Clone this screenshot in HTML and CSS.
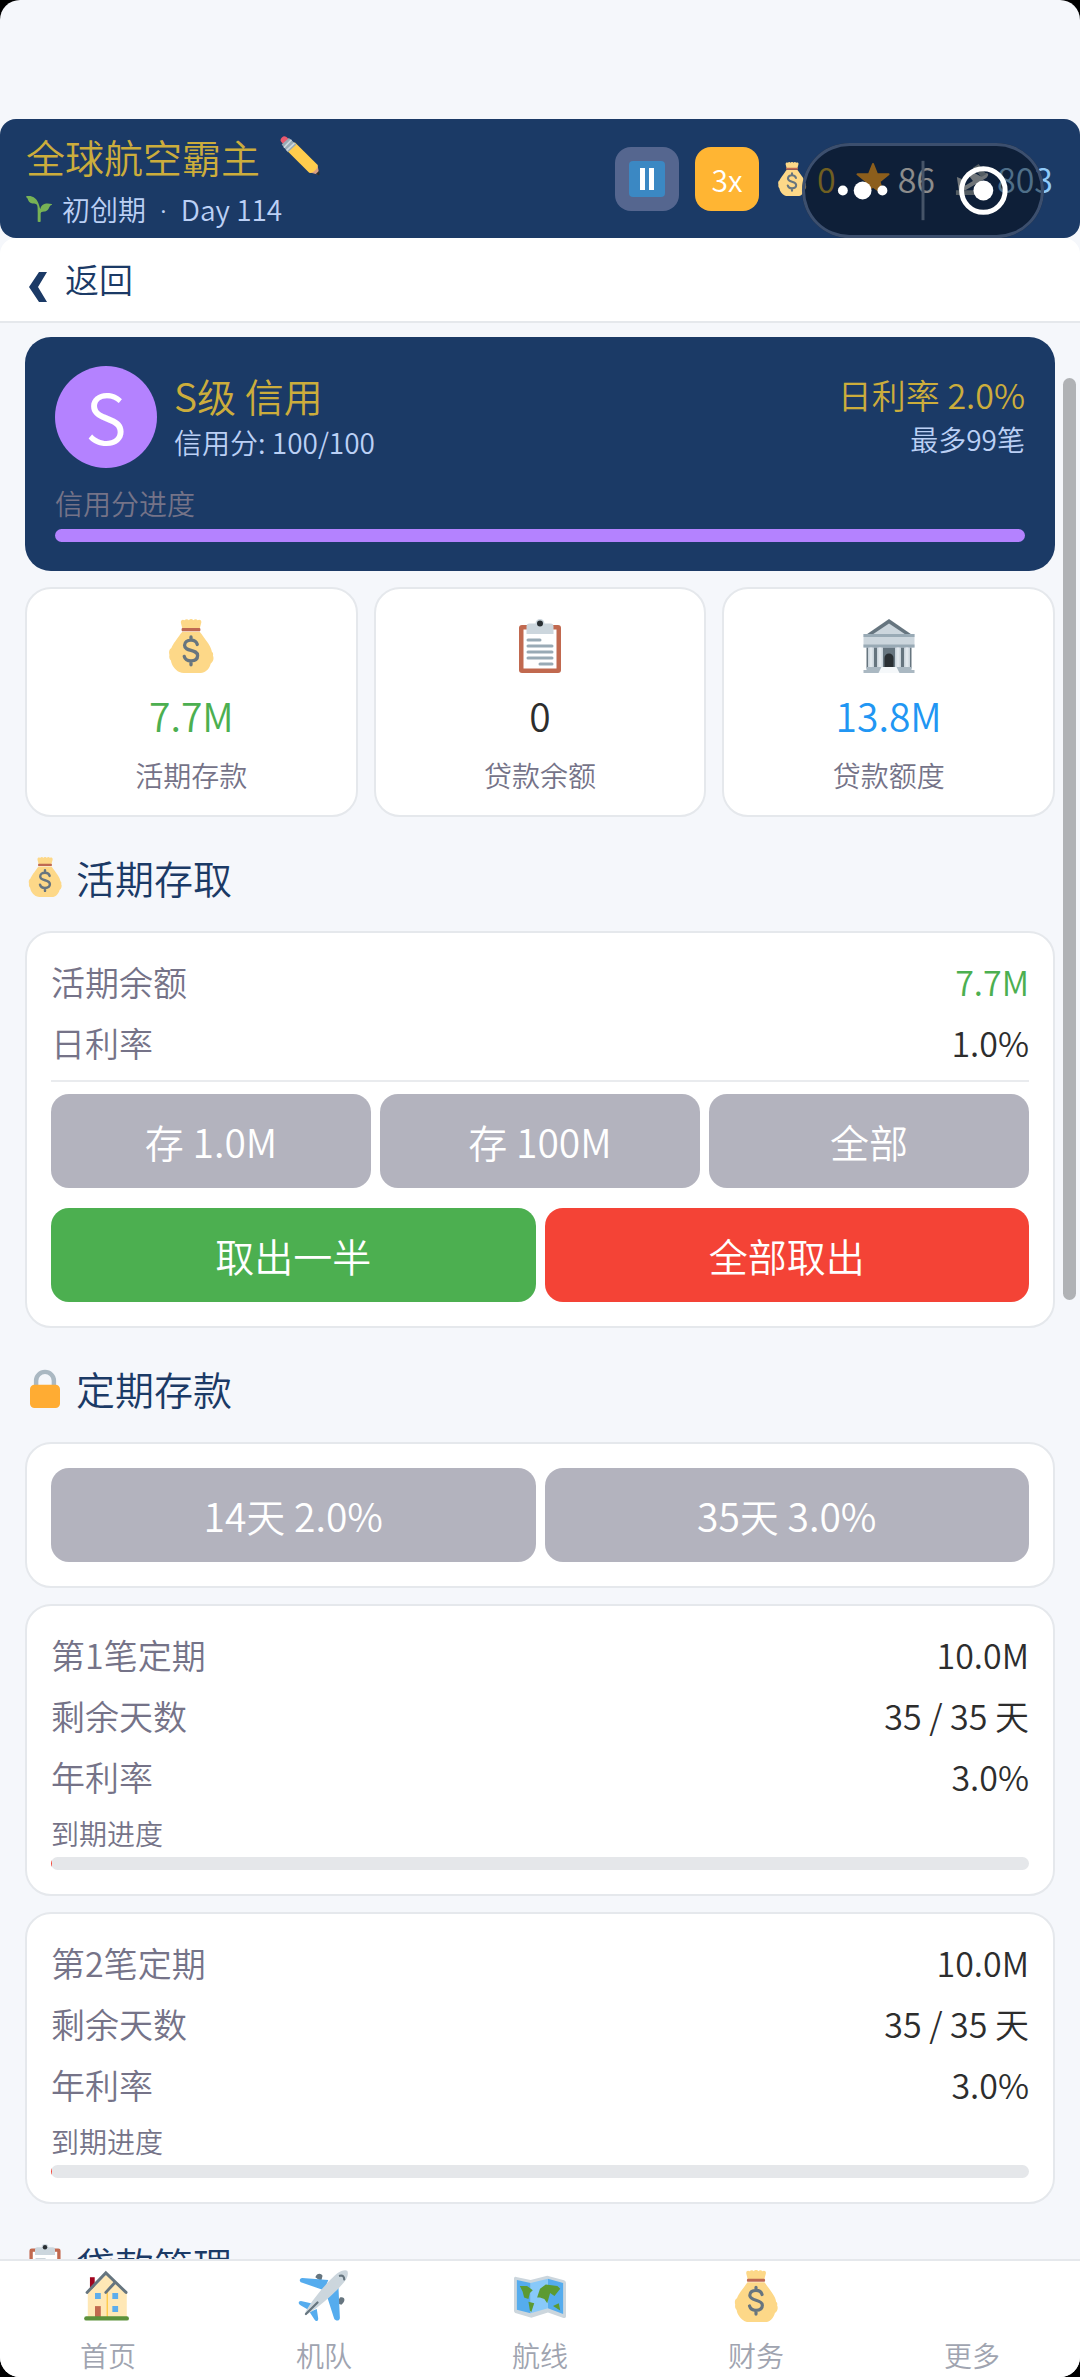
FILE: index.html
```
<!DOCTYPE html>
<html lang="zh-CN">
<head>
  <meta charset="UTF-8" />
  <title>全球航空霸主</title>
  <meta name="viewport" content="width=device-width, initial-scale=1.0" />
  <link rel="stylesheet" href="styles.css">
</head>
<body>
  <svg class="sprite" aria-hidden="true">
    <symbol id="bag" viewBox="0 0 36 36">
      <path fill="#FDD888" d="M31.9 21.9c-.4-3.300-3-6.500-6.200-10.900-.900-1.300-1.900-2.500-1.900-2.500h-11.600s-1 1.200-1.900 2.500C7.100 15.400 5.900 16.900 4.900 19.400 3.300 20.500 3.100 22 3.600 24c-.3 1.600.1 2.800 1 3.700.400 3.300 2.900 6.300 5.600 7.700 1 .5 2 .6 3 .6h11.300c1.500 0 2.800-.500 3.900-1.600 1.400-1.300 2.300-2.800 2.700-4.600 2-1.500 2.300-3.600 1.500-5.400.400-1 .1-1.900-.700-2.500z"/>
      <path fill="#FDD888" d="M12.500 7.500 11.300 2.600C10.900.8 12.400-.2 13.600.900c.9-1.200 2.300-.9 2.900-.1.900-1.100 2.300-1.100 3.100 0 .8-1 2.300-.9 2.800.1 1.300-1 2.900-.1 2.400 1.700l-1.300 4.900z"/>
      <path fill="#BF6952" d="M12.300 6h11.400c.8 0 .8 2.200 0 2.200H12.300c-.8 0-.8-2.200 0-2.200z"/>
      <path fill="none" stroke="#67757F" stroke-width="2.200" stroke-linecap="round" stroke-linejoin="round" d="M22.200 17c-.5-1.900-2-2.900-4.200-2.900-2.500 0-4.300 1.200-4.300 3.400 0 4.500 8.700 2.300 8.700 6.900 0 2.300-1.800 3.500-4.400 3.500-2.400 0-4-1-4.500-3M18 12v2m0 14v2.500"/>
    </symbol>
    <symbol id="clipboard" viewBox="0 0 36 36">
      <rect x="4" y="4" width="28" height="32" rx="2" fill="#C1694F"/>
      <path fill="#fff" d="M7 7h22v26H7z"/>
      <path fill="#CCD6DD" d="M25 3h-4a3 3 0 0 0-6 0h-4a2 2 0 0 0-2 2v5h18V5a2 2 0 0 0-2-2z"/>
      <circle cx="18" cy="3" r="2" fill="#292F33"/>
      <path stroke="#99AAB5" stroke-width="2" stroke-linecap="round" d="M10 14h8M10 18h16M10 22h16M10 26h16M18 30h8"/>
    </symbol>
    <symbol id="bank" viewBox="0 0 36 36">
      <path fill="#66757F" d="M3 16h30v17H3z"/>
      <path fill="#CCD6DD" d="M1 10h34v9H1z"/>
      <path fill="#66757F" d="M18 0 2 11h32z"/>
      <path fill="#CCD6DD" d="m18 3-12 8h24z"/>
      <path fill="#99AAB5" d="M1 10h34v2H1zM1 17h34v2H1z"/>
      <path fill="#CCD6DD" d="M4 19h4v13H4zM10 19h4v13h-4zM22 19h4v13h-4zM28 19h4v13h-4z"/>
      <path fill="#E1E8ED" d="M5 19h2v13H5zM11 19h2v13h-2zM23 19h2v13h-2zM29 19h2v13h-2z"/>
      <path fill="#292F33" d="M15 32v-6a3 3 0 0 1 6 0v6z"/>
      <path fill="#AAB8C2" d="M1 34h34v2H1zM3 32h30v2H3z"/>
      <path fill="#F5F8FA" d="M13 32h10l2 4H11z"/>
    </symbol>
    <symbol id="lock" viewBox="0 0 36 36">
      <path fill="none" stroke="#AAB8C2" stroke-width="4" d="M10 18V11.500a8 8 0 0 1 16 0V18"/>
      <rect x="4.500" y="15" width="27" height="21" rx="4" fill="#FFAC33"/>
    </symbol>
    <symbol id="pencil" viewBox="0 0 36 36">
      <path fill="#D99E82" d="m35.200 33.700-1.500-7.900-7.400 6.900 7.500 2c.9.200 1.500-.2 1.400-1z"/>
      <path fill="#EA596E" d="M2.200 6.500C0 4.300 0 3 1.700 1.300 3.600-.5 5 0 7.300 2.200l2 2-5 4.500z"/>
      <path fill="#FFCC4D" d="m13.300 5.600 20.400 20.300c1.200 2.600-3.700 8.200-7.400 7.200L5.700 12.700z"/>
      <path fill="#99AAB5" d="m8 1.900 6.800 5.700-7.700 7.100-5.600-7z"/>
      <path stroke="#CCD6DD" stroke-width="1.500" d="m3.500 10.400 6.800-7M6 13 13 6.500"/>
      <path fill="#292F33" d="M35.300 35.200c.7-.700.400-2.100-.300-3.600l-2.800 2.700c1.200.800 2.400 1.400 3.100.9z"/>
    </symbol>
    <symbol id="sprout" viewBox="0 0 36 36">
      <path fill="#77B255" d="M35.700 11.200c-6.700-2-14.200-1.400-16 7C17.800 11 15.700 3 8 .7 5.600 0 3 0 .5.500c-.6.100-.6.900-.1 1.200C2.900 3 2.600 7.800 6.500 9.600c3.700 1.700 7 .2 8.500 2.600 1.500 2.500 1.200 6 1.200 23.100 0 .9 4.100.9 4.100 0V24c1-2 1.700-2.200 4.800-2.400 4.500-.2 6.300-3.700 7.300-6.300.7-1.600 1.600-2.500 3.100-3 .7-.2.700-.9.200-1.100z"/>
    </symbol>
    <symbol id="pause" viewBox="0 0 36 36">
      <rect width="36" height="36" rx="4" fill="#3B88C3"/>
      <path fill="#fff" d="M11 7h5v22h-5zM20 7h5v22h-5z"/>
    </symbol>
    <symbol id="star" viewBox="0 0 36 36">
      <path fill="#FFAC33" stroke="#FFAC33" stroke-width="2" stroke-linejoin="round" d="m18 2 4.400 11H34.500l-9.500 7.600 3.500 12.900L18 26.300 7.500 33.500 11 20.600 1.500 13h12.100z"/>
    </symbol>
    <symbol id="arrival" viewBox="0 0 36 36">
      <path fill="#99AAB5" d="M1 30h34v5H1z"/>
      <path fill="#CCD6DD" d="M2 16l5 2 4 7 8-5-7-9 4-2 11 6 5-3c4-1 4 2 1 5L11 30H4z"/>
      <path fill="#99AAB5" d="m19 6 6-4 8 11-5 3z"/>
    </symbol>
    <symbol id="house" viewBox="0 0 36 36">
      <path fill="#A0041E" d="M5.500 5h3.300v8H5.500z"/>
      <path fill="#FFE8B6" d="M4 16 17 3l14 13v17H4z"/>
      <path stroke="#FFCC4D" stroke-width="1" d="M17.500 15v18"/>
      <path fill="none" stroke="#66757F" stroke-width="2" stroke-linecap="round" d="M3.500 15.500 16.500 2l14 13.500M16.500 15.500 23 8.500"/>
      <path fill="#5DADEC" d="M9 16h4v4H9zM21 16h4v4h-4zM21 25h4v4h-4z"/>
      <path fill="#C1694F" d="M9 25h4v8H9z"/>
      <path stroke="#5C913B" stroke-width="3" stroke-linecap="round" d="M3 33.500h28"/>
    </symbol>
    <symbol id="plane" viewBox="0 0 36 36">
      <path fill="#66757F" d="M12 5c1-3 4-3 5-1l-1 4zM29 19c4-1 4 3 1 5l-3-1z"/>
      <path fill="#55ACEE" d="M21 7 3 5.500C1 5.500.5 8 2.500 8.700L18 14zM28 12l1 21c0 2.500-3 2.500-4 .5L20 18zM9 23l-7-1.500c-2 0-2 2 0 3L8 28zM13 27l-5 2 3.500 5.500c1 1.500 2.500 1 2.500-1z"/>
      <path fill="#CCD6DD" d="M5 29.500C8 23 21 7 27.500 2c2-1.500 5.500-2.500 6.500-1.500s.5 4.500-1 6.500C28 14 12 28 5.500 31z"/>
      <path stroke="#66757F" stroke-width="1.500" fill="none" stroke-linecap="round" d="m5.500 30.500 8-8M29 4c2-.5 3 .5 3 2.500"/>
    </symbol>
    <symbol id="map" viewBox="0 0 36 36">
      <path fill="#CCD6DD" d="M0 6c0-1 .7-1.500 1.500-1.200L11.500 7 23 4l11 3c1.300.4 2 1 2 2v23c0 1-.7 1.500-1.700 1.200L23.500 29.500 12 33 1.500 30C.5 29.700 0 29 0 28z"/>
      <path fill="#55ACEE" d="m2 7 9.500 2v21L2 27.500zM23.500 6 34 9v21.500l-10.500-4z"/>
      <path fill="#88C9F9" d="m11.500 9 12-3v20.500l-12 3.500z"/>
      <path fill="#5C9A32" d="m4 11 5 0 4 3-2 2-1 4-3-1-1-4zM10 22l4 1-2 6-1-1zM18 13l4-3 8 1 2 2-4 5-3-2-2 7-2-3-3-1-2 0zM27 25l4-2 1 5z"/>
    </symbol>
  </svg>

  <div class="app">
    <header class="topbar">
      <div class="company">
        <h1>全球航空霸主 <svg class="ico-pencil"><use href="#pencil"/></svg></h1>
        <p><svg class="ico-sprout"><use href="#sprout"/></svg> 初创期 <span class="dot">·</span> Day 114</p>
      </div>
      <div class="controls">
        <button class="ctl pause" aria-label="暂停"><svg><use href="#pause"/></svg></button>
        <button class="ctl speed">3x</button>
      </div>
      <div class="resources">
        <span class="res gold"><svg><use href="#bag"/></svg>0</span>
        <span class="res white"><svg><use href="#star"/></svg>86</span>
        <span class="res blue"><svg><use href="#arrival"/></svg>803</span>
      </div>
      <div class="capsule">
        <svg viewBox="0 0 242 96" aria-hidden="true">
          <g fill="#fff">
            <circle cx="40" cy="48" r="5"/>
            <circle cx="60" cy="48" r="9"/>
            <circle cx="80" cy="48" r="5"/>
            <circle cx="182" cy="48" r="10"/>
          </g>
          <circle cx="182" cy="48" r="22" fill="none" stroke="#fff" stroke-width="5"/>
          <path stroke="#465468" stroke-width="3" d="M121 18v60"/>
        </svg>
      </div>
    </header>

    <div class="backbar">
      <a href="#">
        <svg viewBox="0 0 18 30"><path fill="#1b3a66" d="M10 0h8L9 15l9 15h-8L0 15z"/></svg>
        返回
      </a>
    </div>

    <main class="content">
      <section class="credit">
        <div class="credit-head">
          <div class="grade">S</div>
          <div class="credit-info">
            <h2>S级 信用</h2>
            <p>信用分: 100/100</p>
          </div>
          <div class="credit-rate">
            <strong>日利率 2.0%</strong>
            <p>最多99笔</p>
          </div>
        </div>
        <div class="bar-label">信用分进度</div>
        <div class="bar purple"><div class="fill" style="width: 100%"></div></div>
      </section>

      <section class="stats">
        <div class="stat">
          <svg><use href="#bag"/></svg>
          <div class="value green">7.7M</div>
          <div class="name">活期存款</div>
        </div>
        <div class="stat">
          <svg><use href="#clipboard"/></svg>
          <div class="value">0</div>
          <div class="name">贷款余额</div>
        </div>
        <div class="stat">
          <svg><use href="#bank"/></svg>
          <div class="value azure">13.8M</div>
          <div class="name">贷款额度</div>
        </div>
      </section>

      <h2 class="section-title"><svg><use href="#bag"/></svg>活期存取</h2>
      <section class="card">
        <div class="row"><span>活期余额</span><b class="green">7.7M</b></div>
        <div class="row"><span>日利率</span><b>1.0%</b></div>
        <hr>
        <div class="buttons">
          <button class="btn">存 1.0M</button>
          <button class="btn">存 100M</button>
          <button class="btn">全部</button>
        </div>
        <div class="buttons">
          <button class="btn btn-green">取出一半</button>
          <button class="btn btn-red">全部取出</button>
        </div>
      </section>

      <h2 class="section-title"><svg><use href="#lock"/></svg>定期存款</h2>
      <section class="card">
        <div class="buttons">
          <button class="btn">14天 2.0%</button>
          <button class="btn">35天 3.0%</button>
        </div>
      </section>

      <section class="card">
        <div class="row"><span>第1笔定期</span><b>10.0M</b></div>
        <div class="row wide"><span>剩余天数</span><b>35 / 35 天</b></div>
        <div class="row"><span>年利率</span><b>3.0%</b></div>
        <div class="bar-label">到期进度</div>
        <div class="bar"><div class="fill" style="width: 0.1%"></div></div>
      </section>

      <section class="card">
        <div class="row"><span>第2笔定期</span><b>10.0M</b></div>
        <div class="row"><span>剩余天数</span><b>35 / 35 天</b></div>
        <div class="row"><span>年利率</span><b>3.0%</b></div>
        <div class="bar-label">到期进度</div>
        <div class="bar"><div class="fill" style="width: 0.1%"></div></div>
      </section>

      <h2 class="section-title"><svg><use href="#clipboard"/></svg>贷款管理</h2>
      <div class="scrollbar"></div>
    </main>

    <nav class="tabs">
      <a href="#"><svg><use href="#house"/></svg>首页</a>
      <a href="#"><svg><use href="#plane"/></svg>机队</a>
      <a href="#"><svg><use href="#map"/></svg>航线</a>
      <a href="#"><svg><use href="#bag"/></svg>财务</a>
      <a href="#"><svg></svg>更多</a>
    </nav>
  </div>
</body>
</html>
```

FILE: styles.css
```
* {
  box-sizing: border-box;
}

body {
  margin: 0;
  background: #000;
  font-family: 'Noto Sans CJK SC', sans-serif;
  font-weight: 350;
  color: #2d2d2d;
}

h1, h2, p {
  margin: 0;
  font-weight: inherit;
}

b, strong {
  font-weight: inherit;
}

a {
  color: inherit;
  text-decoration: none;
}

button {
  border: none;
  padding: 0;
  font-family: inherit;
  font-weight: inherit;
  color: #fff;
  cursor: pointer;
}

.sprite {
  display: none;
}

.app {
  height: 100vh;
  display: flex;
  flex-direction: column;
  overflow: hidden;
  padding-top: 119px;
  background: #f5f7fb;
  border-radius: 20px;
}

/* top bar */
.topbar {
  position: relative;
  flex: none;
  height: 119px;
  display: flex;
  align-items: center;
  padding: 0 27px 0 26px;
  background: #1b3a66;
  border-radius: 16px;
}

.company {
  flex: 1;
  padding-top: 4px;
}

.company h1 {
  display: flex;
  align-items: center;
  gap: 20px;
  font-size: 39px;
  line-height: 56px;
  color: #ccad3c;
}

.company p {
  display: flex;
  align-items: center;
  gap: 10px;
  font-size: 28px;
  line-height: 50px;
  color: #bbd0f5;
}

.dot {
  padding: 0 4px;
  font-family: Lato, sans-serif;
}

.ico-pencil {
  width: 40px;
  height: 40px;
}

.ico-sprout {
  width: 26px;
  height: 28px;
}

.controls {
  display: flex;
  gap: 16px;
  margin-right: 16px;
}

.ctl {
  width: 64px;
  height: 64px;
  border-radius: 16px;
  font-size: 30px;
}

.pause {
  display: flex;
  align-items: center;
  justify-content: center;
  background: #55668f;
}

.pause svg {
  width: 38px;
  height: 36px;
}

.speed {
  background: #ffb533;
}

.resources {
  display: flex;
  gap: 20px;
  font-size: 34px;
  line-height: 48px;
}

.res {
  display: flex;
  align-items: center;
  gap: 8px;
}

.res svg {
  width: 34px;
  height: 34px;
}

.gold {
  color: #ccad3c;
}

.white {
  color: #fff;
}

.blue {
  color: #90caf9;
}

.capsule {
  position: absolute;
  top: 24px;
  right: 36px;
  width: 242px;
  height: 95px;
  border-radius: 48px;
  background: rgba(0, 0, 0, 0.45);
  box-shadow: inset 0 0 0 3px #3c4f6e;
}

.capsule svg {
  display: block;
  width: 100%;
  height: 100%;
}

.backbar {
  flex: none;
  height: 85px;
  padding: 0 29px;
  background: #fff;
  border-bottom: 2px solid #e5e8ec;
  border-radius: 16px 16px 0 0;
}

.backbar a {
  display: inline-flex;
  align-items: center;
  gap: 18px;
  font-size: 34px;
  line-height: 82px;
  color: #1b3a66;
}

.backbar svg {
  width: 18px;
  height: 30px;
  margin-top: 16px;
}

/* scroll area */
.content {
  position: relative;
  flex: 1;
  min-height: 0;
  overflow: hidden;
  padding: 14px 25px 0;
}

.scrollbar {
  position: absolute;
  top: 55px;
  right: 4px;
  width: 13px;
  height: 922px;
  border-radius: 7px;
  background: #b0b2b5;
}

.credit {
  padding: 29px 30px;
  background: #1b3a66;
  border-radius: 26px;
}

.credit-head {
  display: flex;
  align-items: center;
  gap: 17px;
  margin-bottom: 17px;
}

.grade {
  width: 102px;
  height: 102px;
  border-radius: 50%;
  background: #b482ff;
  color: #fff;
  font-size: 70px;
  line-height: 98px;
  text-align: center;
}

.credit-info {
  flex: 1;
}

.credit-info h2 {
  font-size: 39px;
  line-height: 54px;
  color: #ccad3c;
}

.credit-info p,
.credit-rate p {
  font-size: 28px;
  line-height: 40px;
  padding-bottom: 4px;
  color: #bbd0f5;
}

.credit-rate {
  text-align: right;
}

.credit-rate strong {
  display: block;
  font-size: 34px;
  line-height: 48px;
  color: #ccad3c;
}

.bar-label {
  font-size: 28px;
  line-height: 40px;
  margin-bottom: 4px;
  color: #757388;
}

.credit .bar-label {
  line-height: 36px;
  margin-bottom: 8px;
}

.bar {
  height: 13px;
  border-radius: 7px;
  overflow: hidden;
  background: #e5e7ea;
}

.fill {
  height: 100%;
  background: #f44336;
}

.purple .fill {
  background: #b482ff;
}

.stats {
  display: grid;
  grid-template-columns: repeat(3, 1fr);
  gap: 16px;
  margin-top: 16px;
}

.stat {
  display: flex;
  flex-direction: column;
  align-items: center;
  padding: 30px 0 22px;
  background: #fff;
  border: 2px solid #e5e8ec;
  border-radius: 26px;
}

.stat svg {
  width: 54px;
  height: 54px;
}

.value {
  margin-top: 16px;
  font-size: 39px;
  line-height: 52px;
}

.name {
  margin-top: 16px;
  font-size: 28px;
  line-height: 36px;
  color: #757388;
}

.green {
  color: #4caf50;
}

.azure {
  color: #2196f3;
}

.section-title {
  display: flex;
  align-items: center;
  gap: 11px;
  height: 114px;
  padding-top: 6px;
  font-size: 39px;
  line-height: 56px;
  color: #1b3a66;
}

.section-title svg {
  width: 40px;
  height: 40px;
}

.card {
  padding: 24px;
  background: #fff;
  border: 2px solid #e5e8ec;
  border-radius: 26px;
}

.card + .card {
  margin-top: 16px;
}

.row {
  display: flex;
  justify-content: space-between;
  margin-bottom: 11px;
  font-size: 34px;
  line-height: 50px;
}

.row span {
  color: #757388;
}

hr {
  margin: 12px 0;
  border: none;
  border-top: 2px solid #e9ebee;
}

.buttons {
  display: flex;
  gap: 9px;
}

.buttons + .buttons {
  margin-top: 20px;
}

.btn {
  flex: 1;
  height: 94px;
  border-radius: 18px;
  background: #b3b3be;
  font-size: 39px;
}

.btn-green {
  background: #4caf50;
}

.btn-red {
  background: #f44336;
}

/* bottom tabs */
.tabs {
  flex: none;
  display: flex;
  height: 118px;
  padding-top: 9px;
  background: #fff;
  border-top: 2px solid #e5e8ec;
}

.tabs a {
  flex: 1;
  display: flex;
  flex-direction: column;
  align-items: center;
  gap: 13px;
  font-size: 28px;
  line-height: 40px;
  color: #a0a4b0;
}

.tabs svg {
  width: 52px;
  height: 52px;
}
```
